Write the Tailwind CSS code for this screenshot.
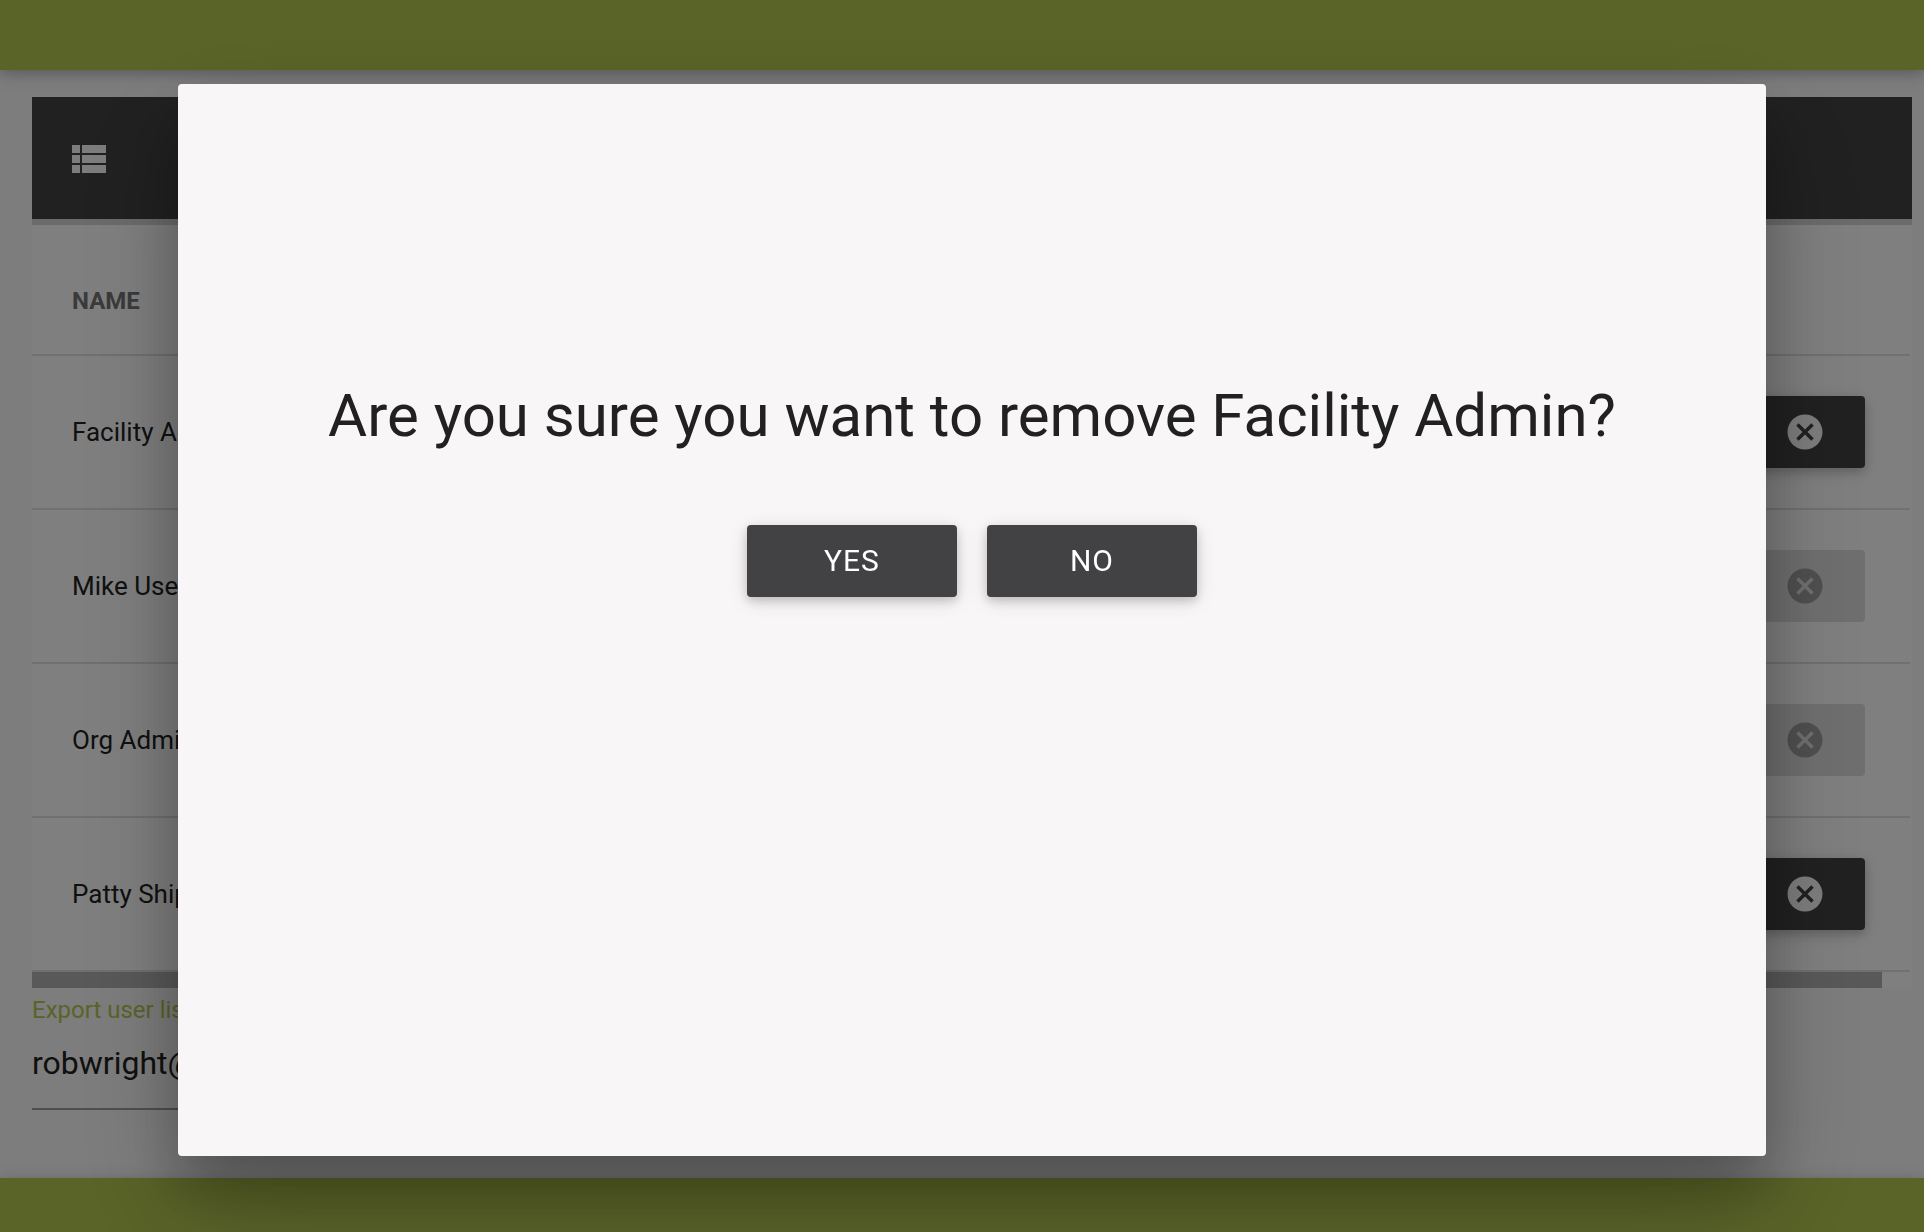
<!DOCTYPE html>
<html lang="en">
<head>
  <meta charset="UTF-8" />
  <title>Manage Users</title>
  <meta name="viewport" content="width=device-width, initial-scale=1" />
  <script src="https://cdn.jsdelivr.net/npm/@tailwindcss/browser@4"></script>
</head>
<body class="min-h-screen flex flex-col bg-[#fafafa] text-[#212121] font-['Roboto',sans-serif] overflow-hidden">

  <header class="h-[70px] bg-[#b4c850] shadow-[0_4px_10px_0_rgba(0,0,0,0.16),0_4px_20px_0_rgba(0,0,0,0.12)]"></header>

  <main class="grow pl-8 pr-3 pt-[27px]">
    <section class="bg-white">
      <div class="h-[122px] px-8 pt-0.5 flex items-center bg-[#424242] text-[#fafafa]">
        <svg class="size-12" viewBox="0 0 24 24" fill="currentColor" aria-hidden="true">
          <path d="M4 14h4v-4H4v4zm0 5h4v-4H4v4zM4 9h4V5H4v4zm5 5h12v-4H9v4zm0 5h12v-4H9v4zM9 5v4h12V5H9z" />
        </svg>
      </div>
      <div class="h-1.5 bg-[#d6d6d6]"></div>

      <div class="pr-0.5">
        <table class="w-full text-left border-separate border-spacing-0">
          <thead>
            <tr>
              <th class="h-[131px] pt-[22px] pl-10 border-b-2 border-[#e0e0e0] text-2xl font-bold text-[#757575]">NAME</th>
              <th class="border-b-2 border-[#e0e0e0]"></th>
            </tr>
          </thead>
          <tbody id="user-rows" class="text-[26px]"></tbody>
        </table>
      </div>

      <div class="h-4 pr-[30px]">
        <div class="h-full bg-[#b2b2b2]"></div>
      </div>
    </section>

    <div class="w-1/2 pt-1.5">
      <label for="export-email" class="block h-8 leading-8 text-2xl text-[#b4c850]">Export user list to</label>
      <input type="email" id="export-email" value="robwright@example.com" class="block w-full h-[84px] pb-2 text-[32px] border-b-2 border-[#9e9e9e] outline-none" />
    </div>
  </main>

  <footer class="h-[54px] bg-[#b4c850] shadow-[0_4px_10px_0_rgba(0,0,0,0.16),0_4px_20px_0_rgba(0,0,0,0.12)]"></footer>

  <!-- confirm modal -->
  <div class="fixed inset-0 pt-[84px] pl-[178px] pr-[158px] bg-black/50">
    <div role="dialog" aria-modal="true" aria-labelledby="confirm-title" class="h-[1072px] max-h-[94%] pt-[294px] flex flex-col items-center rounded bg-[#f8f6f7] shadow-[0_32px_56px_0_rgba(0,0,0,0.22),0_50px_110px_0_rgba(0,0,0,0.21)]">
      <h1 id="confirm-title" class="text-6xl leading-[76px]">Are you sure you want to remove Facility Admin?</h1>
      <div class="mt-[71px] flex gap-[30px] text-3xl text-white">
        <button type="button" class="w-[210px] h-[72px] rounded bg-[#424143] tracking-[1px] shadow-[0_4px_10px_0_rgba(0,0,0,0.16),0_4px_20px_0_rgba(0,0,0,0.12)]">YES</button>
        <button type="button" class="w-[210px] h-[72px] rounded bg-[#424143] tracking-[1px] shadow-[0_4px_10px_0_rgba(0,0,0,0.16),0_4px_20px_0_rgba(0,0,0,0.12)]">NO</button>
      </div>
    </div>
  </div>

  <script>
    const users = [
      { name: "Facility Admin", removable: true },
      { name: "Mike User", removable: false },
      { name: "Org Admin", removable: false },
      { name: "Patty Shipper", removable: true }
    ];

    document.getElementById("user-rows").innerHTML = users.map(user => `
      <tr>
        <td class="h-[154px] pl-10 border-b-2 border-[#e0e0e0]">${user.name}</td>
        <td class="pr-[45px] border-b-2 border-[#e0e0e0]">
          <button type="button" aria-label="Remove ${user.name}" ${user.removable ? "" : "disabled"}
            class="ml-auto w-[120px] h-[72px] flex items-center justify-center rounded bg-[#424242] text-[#fafafa] shadow-[0_4px_10px_0_rgba(0,0,0,0.16),0_4px_20px_0_rgba(0,0,0,0.12)] disabled:bg-[#dfdfdf] disabled:text-[#9f9f9f] disabled:shadow-none">
            <svg class="size-[42px]" viewBox="0 0 24 24" fill="currentColor" aria-hidden="true">
              <path d="M12 2C6.47 2 2 6.47 2 12s4.47 10 10 10 10-4.47 10-10S17.53 2 12 2zm5 13.59L15.59 17 12 13.41 8.41 17 7 15.59 10.59 12 7 8.41 8.41 7 12 10.59 15.59 7 17 8.41 13.41 12 17 15.59z" />
            </svg>
          </button>
        </td>
      </tr>
    `).join('');
  </script>
</body>
</html>
